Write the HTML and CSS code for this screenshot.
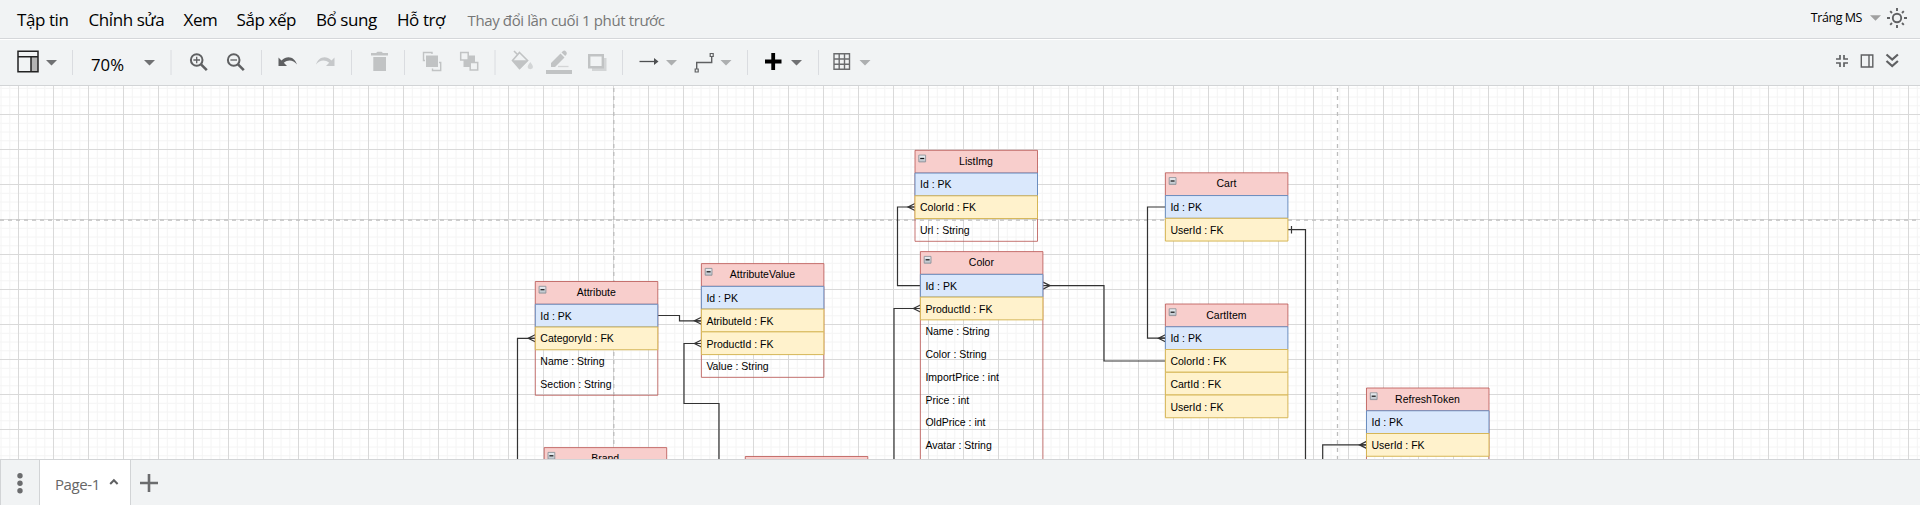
FILE: index.html
```html
<!DOCTYPE html>
<html lang="vi">
<head>
<meta charset="utf-8">
<title>Page-1</title>
<link rel="stylesheet" href="styles.css">
</head>
<body>
<div class="app">
  <header class="menubar">
    <nav class="menus">
      <span class="menu m1">Tập tin</span><span class="menu m2">Chỉnh sửa</span><span class="menu m3">Xem</span><span class="menu m4">Sắp xếp</span><span class="menu m5">Bổ sung</span><span class="menu m6">Hỗ trợ</span><span class="status">Thay đổi lần cuối 1 phút trước</span>
    </nav>
    <div class="account">
      <span class="user">Tráng MS</span>
      <svg width="11" height="6"><path d="M0 0.300h11L5.500 5.800z" fill="#a0a0a0"/></svg>
      <svg width="22" height="22" viewBox="0 0 22 22" fill="none" stroke="#606163" stroke-width="1.900"><circle cx="11" cy="11" r="4.200"/><path d="M11 1v3M11 18v3M1 11h3M18 11h3M4.200 4.200l1.800 1.800M16 16l1.800 1.800M4.200 17.800L6 16M16 6l1.800-1.800"/></svg>
    </div>
  </header>

  <div class="toolbar">
    <svg width="890" height="45" viewBox="0 40 890 45">
      <!-- view layout -->
      <path d="M18 51h20v21H18z" fill="#f1f3f4"/><path d="M31 57h7v14.500h-7z" fill="#b4b4b4"/>
      <path d="M18 51.200h20v20.500H18zM18 56.700h20M31 56.700v15" fill="none" stroke="#222" stroke-width="1.500"/>
      <!-- separators -->
      <path d="M72.500 50v25M171 50v25M261.500 50v25M351.500 50v25M404.500 50v25M495 50v25M622.500 50v25M747.500 50v25M818.500 50v25" stroke="#dadce0"/>
      <path d="M46 60h11l-5.500 5.500zM144 60h11l-5.500 5.500zM791 60h11l-5.500 5.500z" fill="#707173"/>
      <path d="M666 60h11l-5.500 5.500zM720.500 60h11l-5.500 5.500zM859.500 60h11l-5.500 5.500z" fill="#adafb0"/>
      <text class="zoom" x="91" y="71" textLength="33" lengthAdjust="spacingAndGlyphs">70%</text>
      <!-- zoom in and out -->
      <g fill="none" stroke="#5f6062" stroke-width="2"><circle cx="196.700" cy="60" r="5.800"/><path d="M200.800 64.200l6 6" stroke-width="2.600"/><path d="M193.400 60h6.600M196.700 56.700v6.600" stroke-width="1.300"/>
      <circle cx="233.700" cy="60" r="5.800"/><path d="M237.800 64.200l6 6" stroke-width="2.600"/><path d="M230.400 60h6.600" stroke-width="1.300"/></g>
      <!-- undo and redo -->
      <path d="M278.500 57.500v8.500h8.500l-3.200-3.200c4.500-3.600 9.500-2.700 13.200 1.700c-2.400-7.500-9.500-10-15.500-4z" fill="#5f6062"/>
      <path d="M334.500 57.500v8.500h-8.500l3.200-3.200c-4.500-3.600-9.500-2.700-13.200 1.700c2.400-7.500 9.500-10 15.500-4z" fill="#c6c8ca"/>
      <!-- delete -->
      <path d="M371 53h5l1.500-1.300h4L383 53h5v2.500h-17zM373.300 57h12.700v14h-12.700z" fill="#c1c3c4"/>
      <!-- to front and to back -->
      <path d="M426 55.500h12V67h-12z" fill="#c1c3c4"/><path d="M425 60.500h-1.500v-8h8.500v1.500M439 62.500h1.700v8h-8.200v-2" fill="none" stroke="#c1c3c4" stroke-width="1.400"/>
      <path d="M463.500 55.500H475V67h-11.500z" fill="#c1c3c4"/><path d="M460.700 52.500h7.500V60h-7.500zM470.200 62.500h7.500V70h-7.500z" fill="#f1f3f4" stroke="#c1c3c4" stroke-width="1.500"/>
      <!-- fill -->
      <path d="M514 51l3.500 3.500M519.500 52.500l8 8-8 8-7-8z" fill="none" stroke="#c1c3c4" stroke-width="1.600"/><path d="M512.500 60.200h16l-8.500 8.500z" fill="#c1c3c4"/><path d="M530.300 62q5.500 6.800 0 7.200q-5.500-.4 0-7.200" fill="#d3d5d6"/>
      <!-- line color -->
      <path d="M551 67v-4l9.500-9.500 4 4L555 67zM561.500 52.500l1.500-1.500q1.500-1 3 .5t.5 3L565.200 56z" fill="#c1c3c4"/><path d="M558 66.500h10.500" stroke="#d3d5d6" stroke-width="1.300"/><path d="M546 70h26v4h-26z" fill="#c1c3c4"/>
      <!-- shadow -->
      <path d="M592 58h14.500v13H592z" fill="#d3d5d6"/><path d="M589.200 55.200h13.600v12h-13.600z" fill="#f1f3f4" stroke="#c1c3c4" stroke-width="2.400"/>
      <!-- connection and waypoints -->
      <path d="M639.500 61.500h15.500" stroke="#4e4f51" stroke-width="1.300"/><path d="M654 58v7l4.500-3.500z" fill="#4e4f51"/>
      <path d="M696.700 69v-6.500h15V56.500" fill="none" stroke="#5f6062" stroke-width="1.400"/><path d="M695.200 69h3v3h-3zM710.200 53.500h3v3h-3z" fill="#f1f3f4" stroke="#5f6062" stroke-width="1.200"/>
      <!-- insert -->
      <path d="M765 61.500h16.500M773.200 53v17" stroke="#000" stroke-width="3.800"/>
      <!-- table -->
      <path d="M834 53.700h15.500v15.500H834zM834 59h15.500M834 64.200h15.500M839.200 53.700v15.500M844.500 53.700v15.500" fill="none" stroke="#6b6c6e" stroke-width="1.400"/>
    </svg>
    <svg width="70" height="45" viewBox="1832 40 70 45" fill="none" stroke="#5f6062" stroke-width="1.700"><path d="M1836 59h4v-4M1848 59h-4v-4M1836 63h4v4M1848 63h-4v4"/><path d="M1861.300 55h11.500v12h-11.500zM1869 55v12" stroke-width="1.400"/><path d="M1886.500 54.500l5.700 5 5.700-5M1886.500 61l5.700 5 5.700-5" stroke-width="2.200"/></svg>
  </div>

  <main class="canvas">
    <svg class="diagram" width="1920" height="373" viewBox="0 86 1920 373">
      <defs>
        <pattern id="grid" x="18" y="114" width="35" height="35" patternUnits="userSpaceOnUse">
          <path d="M9.250 0v35M18 0v35M26.750 0v35M0 9.250h35M0 18h35M0 26.750h35" stroke="#f4f4f4"/>
          <path d="M.5 0v35M0 .5h35" stroke="#d9d9d9"/>
        </pattern>
        <linearGradient id="fold" x2="0" y2="1"><stop offset="0" stop-color="#eef2f5"/><stop offset="1" stop-color="#b9c0c8"/></linearGradient>
        <g id="collapse"><path d="M3.800 4.800h6.800v6.800H3.800z" fill="url(#fold)" stroke="#8d9299" stroke-width=".9"/><path d="M5.200 8.200h4" stroke="#111" stroke-width="1.200"/></g>
        <path id="head" d="M0 0h122.500v22.750H0z" fill="#f8cecc" stroke="#b85450" stroke-opacity=".8"/>
        <path id="pk" d="M0 0h122.500v22.750H0z" fill="#dae8fc" stroke="#6c8ebf"/>
        <path id="fk" d="M0 0h122.500v22.750H0z" fill="#fff2cc" stroke="#d6b656"/>
        <path id="many" d="M0-3.500L-7 0L0 3.500M-7 0H0"/>
      </defs>
      <path d="M0 86h1920v373H0z" fill="#fff"/><path d="M0 86h1920v373H0z" fill="url(#grid)"/>
      <g fill="none" stroke="#bdbdbd" stroke-width="1.300" stroke-dasharray="4 4"><path d="M613.800 88v371M1337.500 88v371" /><path d="M0 220.200h1920"/></g>

      <g class="edges">
        <path d="M657.700 315.500h21.800v5.300h22M535.200 338.300h-17.700V459M701.400 343.500H684v60h35V459M915 207h-17.500v78.600h23M920.400 308.500H894V459M1043 285.600h61V361h61.400M1165.400 207h-17.900v131.200h18M1288 229.700h17.500V459M1291.500 226v7.500M1366.500 444.900h-43.800V459"/>
        <use href="#many" x="701.400" y="320.800"/><use href="#many" x="535.200" y="338.300"/><use href="#many" x="701.400" y="343.500"/><use href="#many" x="915" y="207"/><use href="#many" x="920.400" y="308.500"/><use href="#many" x="1165.400" y="338.200"/><use href="#many" x="1366.500" y="444.900"/>
        <path d="M1043 282.100l7 3.500-7 3.500"/>
      </g>

      <g transform="translate(535.300 281.500)">
        <path class="frame" d="M0 22.750h122.500v91H0z"/><use href="#head"/><use href="#pk" y="22.750"/><use href="#fk" y="45.500"/><use href="#collapse"/>
        <text class="title" x="61" y="14.500">Attribute</text><text x="5" y="38">Id : PK</text><text x="5" y="60.500">CategoryId : FK</text><text x="5" y="83.500">Name : String</text><text x="5" y="106.500">Section : String</text>
      </g>
      <g transform="translate(701.400 263.600)">
        <path class="frame" d="M0 22.750h122.500v91H0z"/><use href="#head"/><use href="#pk" y="22.750"/><use href="#fk" y="45.500"/><use href="#fk" y="68.250"/><use href="#collapse"/>
        <text class="title" x="61" y="14.500">AttributeValue</text><text x="5" y="38.400">Id : PK</text><text x="5" y="61.400">AtributeId : FK</text><text x="5" y="84.400">ProductId : FK</text><text x="5" y="106.400">Value : String</text>
      </g>
      <g transform="translate(915 150.300)">
        <path class="frame" d="M0 22.750h122.500v68.250H0z"/><use href="#head"/><use href="#pk" y="22.750"/><use href="#fk" y="45.500"/><use href="#collapse"/>
        <text class="title" x="61" y="14.700">ListImg</text><text x="5" y="37.700">Id : PK</text><text x="5" y="60.700">ColorId : FK</text><text x="5" y="83.700">Url : String</text>
      </g>
      <g transform="translate(920.400 251.600)">
        <path class="frame" d="M0 22.750h122.500v230H0z"/><use href="#head"/><use href="#pk" y="22.750"/><use href="#fk" y="45.500"/><use href="#collapse"/>
        <text class="title" x="61" y="14.400">Color</text><text x="5" y="38.400">Id : PK</text><text x="5" y="61.400">ProductId : FK</text><text x="5" y="83.400">Name : String</text><text x="5" y="106.400">Color : String</text><text x="5" y="129.400">ImportPrice : int</text><text x="5" y="152.400">Price : int</text><text x="5" y="174.400">OldPrice : int</text><text x="5" y="197.400">Avatar : String</text>
      </g>
      <g transform="translate(1165.400 172.800)">
        <use href="#head"/><use href="#pk" y="22.750"/><use href="#fk" y="45.500"/><use href="#collapse"/>
        <text class="title" x="61" y="14.200">Cart</text><text x="5" y="38.200">Id : PK</text><text x="5" y="61.200">UserId : FK</text>
      </g>
      <g transform="translate(1165.400 304)">
        <use href="#head"/><use href="#pk" y="22.750"/><use href="#fk" y="45.500"/><use href="#fk" y="68.250"/><use href="#fk" y="91"/><use href="#collapse"/>
        <text class="title" x="61" y="15">CartItem</text><text x="5" y="38">Id : PK</text><text x="5" y="61">ColorId : FK</text><text x="5" y="84">CartId : FK</text><text x="5" y="107">UserId : FK</text>
      </g>
      <g transform="translate(1366.500 388)">
        <path class="frame" d="M0 22.750h122.500v91H0z"/><use href="#head"/><use href="#pk" y="22.750"/><use href="#fk" y="45.500"/><use href="#collapse"/>
        <text class="title" x="61" y="15">RefreshToken</text><text x="5" y="38">Id : PK</text><text x="5" y="61">UserId : FK</text>
      </g>
      <g transform="translate(544.200 447.600)"><use href="#head"/><use href="#collapse"/><text class="title" x="61" y="14.400">Brand</text></g>
      <use href="#head" x="745.300" y="456.500"/>
    </svg>
  </main>

  <footer class="pages">
    <svg class="more" width="38" height="45" viewBox="1 460 38 45" fill="#6b6c6e"><circle cx="20" cy="475.700" r="2.700"/><circle cx="20" cy="483.200" r="2.700"/><circle cx="20" cy="490.700" r="2.700"/></svg>
    <div class="tab"><span>Page-1</span><svg width="10" height="8" fill="none" stroke="#5f6062" stroke-width="2"><path d="M1.200 6l3.700-3.800L8.600 6"/></svg></div>
    <svg width="40" height="45" viewBox="131 460 40 45" stroke="#6b6c6e" stroke-width="2.600"><path d="M140 483h18M149 474v18"/></svg>
  </footer>
</div>
</body>
</html>
```
FILE: styles.css
```css
body{margin:0;font-family:"Open Sans",sans-serif;background:#f1f3f4;color:#000}
svg{display:block;flex:none}
.app{height:505px;display:flex;flex-direction:column;overflow:hidden}
.menubar{box-sizing:border-box;height:40px;display:flex;align-items:center;justify-content:space-between;border-bottom:1px solid #fff;box-shadow:inset 0 -1px #d5d7da;padding:0 12px 0 17px}
.menus{display:flex;align-items:center;white-space:nowrap}
.menu{font-size:17px;letter-spacing:-.42px}
.m1{width:71.500px}
.m2{width:95px}
.m3{width:53px}
.m4{width:79.500px}
.m5{width:81px}
.m6{width:70.500px}
.status{font-size:15px;letter-spacing:-.38px;color:#777}
.account{display:flex;align-items:center;height:36px;margin-bottom:4px}
.user{font-size:12.500px;letter-spacing:-.45px;margin-right:8px}
.account svg + svg{margin-left:5px}
.toolbar{display:flex;justify-content:space-between;height:45px;padding-right:18px}
.zoom{font-size:17px}
.canvas{height:373px;border-top:1px solid #d2d4d6;border-bottom:1px solid #d2d4d6;box-shadow:none;overflow:hidden}
.diagram text{font:10.500px "Liberation Sans",Arial,sans-serif}
.diagram .title{text-anchor:middle}
.frame{fill:none;stroke:#b85450;stroke-opacity:.8}
.edges{fill:none;stroke:#333;stroke-width:1.200}
.pages{display:flex;height:45px;border-left:1px solid #d2d4d6}
.tab{box-sizing:border-box;width:92px;display:flex;align-items:center;padding:2px 0 0 15px;background:#fff;border:solid #d2d4d6;border-width:0 1px;font-size:15px;letter-spacing:-.4px;color:#666}
.tab svg{margin:-4px 0 0 9px}
```
